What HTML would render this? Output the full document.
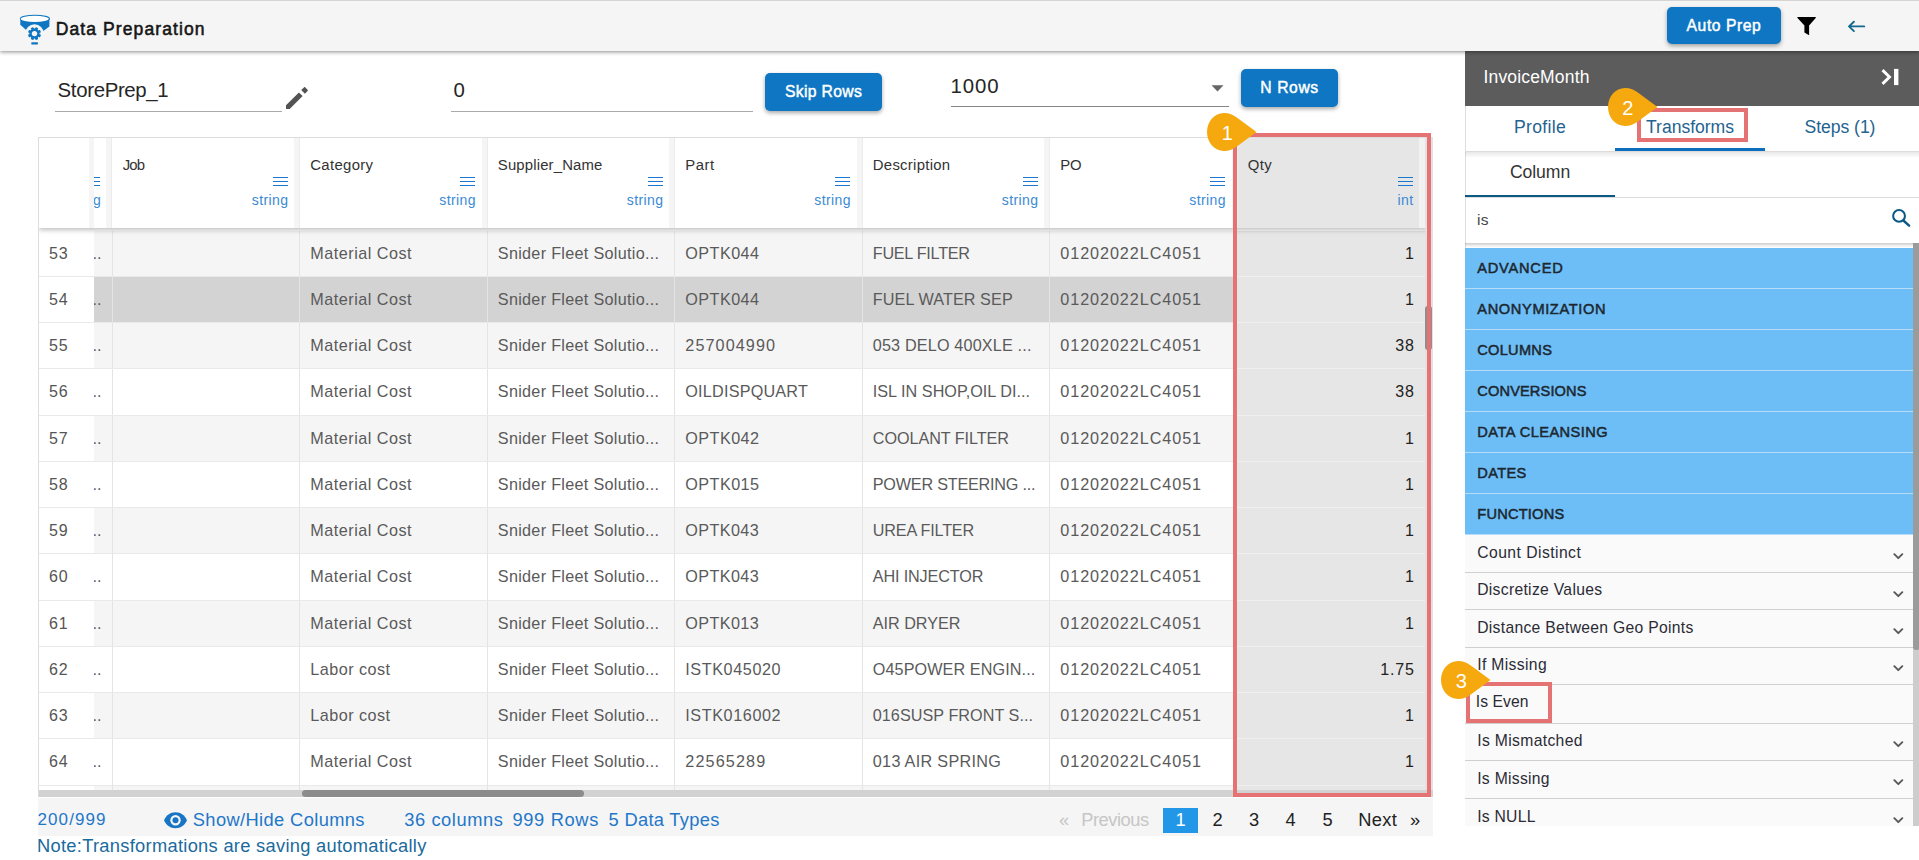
<!DOCTYPE html>
<html>
<head>
<meta charset="utf-8">
<title>Data Preparation</title>
<style>
*{box-sizing:border-box;margin:0;padding:0}
html,body{width:1919px;height:860px;overflow:hidden;background:#fff;font-family:"Liberation Sans",sans-serif;color:#333}
div,span{white-space:nowrap}
.a{position:absolute}
#hdr{position:absolute;left:0;top:0;width:1919px;height:51px;background:#f5f5f5;box-shadow:0 1px 4px rgba(0,0,0,.45),inset 0 1px 0 #d4d4d4;z-index:5}
#title{position:absolute;left:55.7px;top:18.6px;font-size:17.5px;color:#151515;-webkit-text-stroke:.55px #151515}
.btn{position:absolute;background:#0e76c2;color:#fff;border-radius:5px;font-size:15.7px;text-align:center;box-shadow:0 2px 4px rgba(0,0,0,.35);-webkit-text-stroke:.45px #fff}
.uline{position:absolute;height:1px;background:#aaa}
.tbtxt{position:absolute;font-size:20.4px;color:#262626}
#tbl{position:absolute;left:38px;top:137px;width:1395px;height:660px;border-left:1px solid #ddd;border-top:1px solid #ddd;overflow:hidden;background:#fff}
#thead{position:absolute;left:0;top:0;width:1395px;height:90px;background:#fff;box-shadow:0 2px 5px rgba(0,0,0,.26);z-index:3}
.th{position:absolute;top:0;height:90px;background:#fff}
.th .nm{position:absolute;left:10.2px;top:18.9px;font-size:14.9px;color:#333}
.th .ty{position:absolute;right:11.6px;top:53.6px;font-size:14px;color:#3a8ad4;letter-spacing:.4px}
.th .hb{position:absolute;right:12.6px;top:39px;width:15px;height:10px}
.th .hb i{position:absolute;left:0;width:15px;height:1.25px;background:#1b78d0}
.th .rs{position:absolute;right:0;top:0;width:6px;height:90px;background:#f5f5f5;border-right:1px solid #ececec}
.row{position:absolute;left:0;width:1387px;height:46.25px;border-bottom:1px solid #e9e9e9}
.row.o{background:#f5f5f5}
.row.e{background:#fff}
.row.s{background:#d3d3d3}
.c{position:absolute;top:0;height:100%;border-left:1px solid #e4e4e4;font-size:16.2px;color:#5a5a5a;line-height:44px;padding-left:10.1px;overflow:hidden}
.rn{position:absolute;left:0;top:0;width:55px;height:100%;background:#fff;font-size:16px;color:#555;line-height:45px;padding-left:10px;letter-spacing:.8px}
.q{position:absolute;top:0;height:calc(100% + 1px);background:#e6e6e6;text-align:right;padding-right:9.6px;font-size:16px;color:#222;line-height:45px;border-bottom:1px solid #efefef;letter-spacing:.9px}
#ftr{position:absolute;left:38px;top:797.5px;width:1395px;height:38.2px;background:#f5f5f5}
.ft{position:absolute}
.pg{position:absolute;font-size:18.3px;color:#222;top:808.8px}
#rp{position:absolute;left:1465px;top:51px;width:454px;height:809px;background:#fff;box-shadow:inset 1px 0 0 #dedede}
#rph{position:absolute;left:0;top:0;width:454px;height:55px;background:#5c5c5c}
.tab{position:absolute;top:55px;height:46px;width:150px;text-align:center;font-size:17.6px;color:#24638f;line-height:42px}
.cat{position:absolute;left:0;width:448px;height:41px;background:#6dbef6;border-bottom:1px solid #b5dcf8;font-size:14.6px;color:#1d2730;-webkit-text-stroke:.5px #1d2730;line-height:41px;padding-left:12.3px}
.it{position:absolute;left:0;width:448px;background:#fafafa;border-bottom:1px solid #cfcfcf;font-size:15.7px;color:#2b2b35;padding-left:12.2px}
.it svg{position:absolute;right:9px}
.redbox{position:absolute;border:4px solid #e57373}
.badge{position:absolute;z-index:9}
.badge span{position:absolute;left:1px;top:.8px;width:38px;height:38px;line-height:38px;text-align:center;color:#fff;font-size:20px}
</style>
</head>
<body>
<div id="hdr">
<svg class="a" style="left:14px;top:8px" width="48" height="42" viewBox="14 8 48 42">
<ellipse cx="34.9" cy="18.7" rx="15.1" ry="4" fill="#0f76c2"/>
<path d="M20.3 18.9 L20.3 24.7 L34.5 37.4 L49.4 26.6 L49.4 18.9 Z" fill="#0f76c2"/>
<ellipse cx="34.75" cy="18.85" rx="14.1" ry="3.1" fill="#fff"/>
<circle cx="34.5" cy="33.6" r="9.3" fill="#f5f5f5"/>
<g fill="#0f76c2"><circle cx="34.5" cy="33.6" r="5"/>
<rect x="33.1" y="27.1" width="2.8" height="13" rx=".5" transform="rotate(22.5 34.5 33.6)"/>
<rect x="33.1" y="27.1" width="2.8" height="13" rx=".5" transform="rotate(67.5 34.5 33.6)"/>
<rect x="33.1" y="27.1" width="2.8" height="13" rx=".5" transform="rotate(112.5 34.5 33.6)"/>
<rect x="33.1" y="27.1" width="2.8" height="13" rx=".5" transform="rotate(157.5 34.5 33.6)"/></g>
<circle cx="34.5" cy="33.6" r="2.7" fill="#f5f5f5"/>
<rect x="31.3" y="42.2" width="6.6" height="2.2" rx=".4" fill="#0f76c2"/>
</svg>
<div id="title"><span style="letter-spacing:1.106px">Data Preparation</span></div>
<div class="btn" style="left:1667px;top:6.7px;width:114px;height:37px;line-height:38.8px"><span style="letter-spacing:0.565px">Auto Prep</span></div>
<svg class="a" style="left:1790px;top:10px" width="34" height="30" viewBox="1790 10 34 30"><path d="M1797.9 17.1 H1815.3 C1815.9 17.1 1816 17.6 1815.7 18 L1809.1 25.6 V35.2 L1804.4 32.4 V25.6 L1797.5 18 C1797.2 17.6 1797.3 17.1 1797.9 17.1 Z" fill="#000"/></svg>
<svg class="a" style="left:1840px;top:14px" width="34" height="26" viewBox="1840 14 34 26"><path d="M1853.9 21.7 L1849 26.4 L1853.9 31.1 M1849.2 26.4 H1864.2" fill="none" stroke="#12698f" stroke-width="1.9" stroke-linecap="round" stroke-linejoin="round"/></svg>
</div>
<div class="tbtxt" style="left:57.6px;top:79.0px"><span style="letter-spacing:-0.34px">StorePrep_1</span></div>
<div class="uline" style="left:55px;top:111px;width:227px"></div>
<svg class="a" style="left:285px;top:86px" width="24" height="24" viewBox="0 0 24 24"><path d="M1 19.3 V23 H4.7 L17.6 10.1 L13.9 6.4 Z M22.6 5.1 C23 4.7 23 4.1 22.6 3.7 L20.3 1.4 C19.9 1 19.3 1 18.9 1.4 L16.2 4.1 L19.9 7.8 Z" fill="#535353"/></svg>
<div class="tbtxt" style="left:453.4px;top:79.0px">0</div>
<div class="uline" style="left:451px;top:111px;width:302px"></div>
<div class="btn" style="left:765px;top:73px;width:117px;height:38px;line-height:38.6px"><span style="letter-spacing:0.349px">Skip Rows</span></div>
<div class="tbtxt" style="left:950.6px;top:74.8px"><span style="letter-spacing:0.842px">1000</span></div>
<svg class="a" style="left:1211px;top:85px" width="13" height="7" viewBox="0 0 13 7"><path d="M0.5 0.3 H12.5 L6.5 6.6 Z" fill="#666"/></svg>
<div class="uline" style="left:951px;top:106px;width:277.5px;background:#858585"></div>
<div class="btn" style="left:1241px;top:69px;width:97px;height:38px;line-height:38.6px"><span style="letter-spacing:0.596px">N Rows</span></div>
<div id="tbl">
<div id="thead">
<div class="th" style="left:55px;width:18px;overflow:hidden"><div class="hb" style="left:-9px;right:auto"><i style="top:0"></i><i style="top:4px"></i><i style="top:8px"></i></div><div class="ty" style="left:-29.5px;right:auto">string</div><div class="rs"></div></div>
<div class="a" style="left:50px;top:0;width:5px;height:90px;background:#f5f5f5"></div>
<div class="th" style="left:73.6px;width:187.5px;background:#fff"><div class="nm"><span style="letter-spacing:-0.858px">Job</span></div><div class="hb"><i style="top:0"></i><i style="top:4px"></i><i style="top:8px"></i></div><div class="ty">string</div><div class="rs" style=""></div></div>
<div class="th" style="left:261.1px;width:187.5px;background:#fff"><div class="nm"><span style="letter-spacing:0.325px">Category</span></div><div class="hb"><i style="top:0"></i><i style="top:4px"></i><i style="top:8px"></i></div><div class="ty">string</div><div class="rs" style=""></div></div>
<div class="th" style="left:448.6px;width:187.5px;background:#fff"><div class="nm"><span style="letter-spacing:0.163px">Supplier_Name</span></div><div class="hb"><i style="top:0"></i><i style="top:4px"></i><i style="top:8px"></i></div><div class="ty">string</div><div class="rs" style=""></div></div>
<div class="th" style="left:636.1px;width:187.5px;background:#fff"><div class="nm"><span style="letter-spacing:0.529px">Part</span></div><div class="hb"><i style="top:0"></i><i style="top:4px"></i><i style="top:8px"></i></div><div class="ty">string</div><div class="rs" style=""></div></div>
<div class="th" style="left:823.6px;width:187.5px;background:#fff"><div class="nm"><span style="letter-spacing:0.282px">Description</span></div><div class="hb"><i style="top:0"></i><i style="top:4px"></i><i style="top:8px"></i></div><div class="ty">string</div><div class="rs" style=""></div></div>
<div class="th" style="left:1011.1px;width:187.5px;background:#fff"><div class="nm"><span style="letter-spacing:-0.216px">PO</span></div><div class="hb"><i style="top:0"></i><i style="top:4px"></i><i style="top:8px"></i></div><div class="ty">string</div><div class="rs" style=""></div></div>
<div class="th" style="left:1198.6px;width:187.5px;background:#e6e6e6"><div class="nm"><span style="letter-spacing:0.414px">Qty</span></div><div class="hb"><i style="top:0"></i><i style="top:4px"></i><i style="top:8px"></i></div><div class="ty">int</div><div class="rs" style="background:#f2f2f2;border-right:0"></div></div>
</div>
<div class="row o" style="top:92.5px"><div class="rn">53</div><div class="c" style="left:55px;width:18px;padding-left:0;border-left:0;letter-spacing:0;text-indent:-1.5px">..</div><div class="c" style="left:72.7px;width:187.5px"></div><div class="c" style="left:260.2px;width:187.5px"><span style="letter-spacing:0.495px">Material Cost</span></div><div class="c" style="left:447.7px;width:187.5px"><span style="letter-spacing:0.297px">Snider Fleet Solutio...</span></div><div class="c" style="left:635.2px;width:187.5px"><span style="letter-spacing:0.451px">OPTK044</span></div><div class="c" style="left:822.7px;width:187.5px"><span style="letter-spacing:-0.264px">FUEL FILTER</span></div><div class="c" style="left:1010.2px;width:187.5px"><span style="letter-spacing:0.928px">01202022LC4051</span></div><div class="q" style="left:1198px;width:187.5px">1</div></div>
<div class="row s" style="top:138.75px"><div class="rn">54</div><div class="c" style="left:55px;width:18px;padding-left:0;border-left:0;letter-spacing:0;text-indent:-1.5px">..</div><div class="c" style="left:72.7px;width:187.5px"></div><div class="c" style="left:260.2px;width:187.5px"><span style="letter-spacing:0.495px">Material Cost</span></div><div class="c" style="left:447.7px;width:187.5px"><span style="letter-spacing:0.297px">Snider Fleet Solutio...</span></div><div class="c" style="left:635.2px;width:187.5px"><span style="letter-spacing:0.451px">OPTK044</span></div><div class="c" style="left:822.7px;width:187.5px"><span style="letter-spacing:0.084px">FUEL WATER SEP</span></div><div class="c" style="left:1010.2px;width:187.5px"><span style="letter-spacing:0.928px">01202022LC4051</span></div><div class="q" style="left:1198px;width:187.5px">1</div></div>
<div class="row o" style="top:185.0px"><div class="rn">55</div><div class="c" style="left:55px;width:18px;padding-left:0;border-left:0;letter-spacing:0;text-indent:-1.5px">..</div><div class="c" style="left:72.7px;width:187.5px"></div><div class="c" style="left:260.2px;width:187.5px"><span style="letter-spacing:0.495px">Material Cost</span></div><div class="c" style="left:447.7px;width:187.5px"><span style="letter-spacing:0.297px">Snider Fleet Solutio...</span></div><div class="c" style="left:635.2px;width:187.5px"><span style="letter-spacing:1.096px">257004990</span></div><div class="c" style="left:822.7px;width:187.5px"><span style="letter-spacing:0.162px">053 DELO 400XLE ...</span></div><div class="c" style="left:1010.2px;width:187.5px"><span style="letter-spacing:0.928px">01202022LC4051</span></div><div class="q" style="left:1198px;width:187.5px">38</div></div>
<div class="row e" style="top:231.25px"><div class="rn">56</div><div class="c" style="left:55px;width:18px;padding-left:0;border-left:0;letter-spacing:0;text-indent:-1.5px">..</div><div class="c" style="left:72.7px;width:187.5px"></div><div class="c" style="left:260.2px;width:187.5px"><span style="letter-spacing:0.495px">Material Cost</span></div><div class="c" style="left:447.7px;width:187.5px"><span style="letter-spacing:0.297px">Snider Fleet Solutio...</span></div><div class="c" style="left:635.2px;width:187.5px"><span style="letter-spacing:0.214px">OILDISPQUART</span></div><div class="c" style="left:822.7px;width:187.5px"><span style="letter-spacing:0.023px">ISL IN SHOP,OIL DI...</span></div><div class="c" style="left:1010.2px;width:187.5px"><span style="letter-spacing:0.928px">01202022LC4051</span></div><div class="q" style="left:1198px;width:187.5px">38</div></div>
<div class="row o" style="top:277.5px"><div class="rn">57</div><div class="c" style="left:55px;width:18px;padding-left:0;border-left:0;letter-spacing:0;text-indent:-1.5px">..</div><div class="c" style="left:72.7px;width:187.5px"></div><div class="c" style="left:260.2px;width:187.5px"><span style="letter-spacing:0.495px">Material Cost</span></div><div class="c" style="left:447.7px;width:187.5px"><span style="letter-spacing:0.297px">Snider Fleet Solutio...</span></div><div class="c" style="left:635.2px;width:187.5px"><span style="letter-spacing:0.451px">OPTK042</span></div><div class="c" style="left:822.7px;width:187.5px"><span style="letter-spacing:-0.063px">COOLANT FILTER</span></div><div class="c" style="left:1010.2px;width:187.5px"><span style="letter-spacing:0.928px">01202022LC4051</span></div><div class="q" style="left:1198px;width:187.5px">1</div></div>
<div class="row e" style="top:323.75px"><div class="rn">58</div><div class="c" style="left:55px;width:18px;padding-left:0;border-left:0;letter-spacing:0;text-indent:-1.5px">..</div><div class="c" style="left:72.7px;width:187.5px"></div><div class="c" style="left:260.2px;width:187.5px"><span style="letter-spacing:0.495px">Material Cost</span></div><div class="c" style="left:447.7px;width:187.5px"><span style="letter-spacing:0.297px">Snider Fleet Solutio...</span></div><div class="c" style="left:635.2px;width:187.5px"><span style="letter-spacing:0.451px">OPTK015</span></div><div class="c" style="left:822.7px;width:187.5px"><span style="letter-spacing:-0.217px">POWER STEERING ...</span></div><div class="c" style="left:1010.2px;width:187.5px"><span style="letter-spacing:0.928px">01202022LC4051</span></div><div class="q" style="left:1198px;width:187.5px">1</div></div>
<div class="row o" style="top:370.0px"><div class="rn">59</div><div class="c" style="left:55px;width:18px;padding-left:0;border-left:0;letter-spacing:0;text-indent:-1.5px">..</div><div class="c" style="left:72.7px;width:187.5px"></div><div class="c" style="left:260.2px;width:187.5px"><span style="letter-spacing:0.495px">Material Cost</span></div><div class="c" style="left:447.7px;width:187.5px"><span style="letter-spacing:0.297px">Snider Fleet Solutio...</span></div><div class="c" style="left:635.2px;width:187.5px"><span style="letter-spacing:0.401px">OPTK043</span></div><div class="c" style="left:822.7px;width:187.5px"><span style="letter-spacing:-0.174px">UREA FILTER</span></div><div class="c" style="left:1010.2px;width:187.5px"><span style="letter-spacing:0.928px">01202022LC4051</span></div><div class="q" style="left:1198px;width:187.5px">1</div></div>
<div class="row e" style="top:416.25px"><div class="rn">60</div><div class="c" style="left:55px;width:18px;padding-left:0;border-left:0;letter-spacing:0;text-indent:-1.5px">..</div><div class="c" style="left:72.7px;width:187.5px"></div><div class="c" style="left:260.2px;width:187.5px"><span style="letter-spacing:0.495px">Material Cost</span></div><div class="c" style="left:447.7px;width:187.5px"><span style="letter-spacing:0.297px">Snider Fleet Solutio...</span></div><div class="c" style="left:635.2px;width:187.5px"><span style="letter-spacing:0.401px">OPTK043</span></div><div class="c" style="left:822.7px;width:187.5px"><span style="letter-spacing:-0.14px">AHI INJECTOR</span></div><div class="c" style="left:1010.2px;width:187.5px"><span style="letter-spacing:0.928px">01202022LC4051</span></div><div class="q" style="left:1198px;width:187.5px">1</div></div>
<div class="row o" style="top:462.5px"><div class="rn">61</div><div class="c" style="left:55px;width:18px;padding-left:0;border-left:0;letter-spacing:0;text-indent:-1.5px">..</div><div class="c" style="left:72.7px;width:187.5px"></div><div class="c" style="left:260.2px;width:187.5px"><span style="letter-spacing:0.495px">Material Cost</span></div><div class="c" style="left:447.7px;width:187.5px"><span style="letter-spacing:0.297px">Snider Fleet Solutio...</span></div><div class="c" style="left:635.2px;width:187.5px"><span style="letter-spacing:0.401px">OPTK013</span></div><div class="c" style="left:822.7px;width:187.5px"><span style="letter-spacing:-0.032px">AIR DRYER</span></div><div class="c" style="left:1010.2px;width:187.5px"><span style="letter-spacing:0.928px">01202022LC4051</span></div><div class="q" style="left:1198px;width:187.5px">1</div></div>
<div class="row e" style="top:508.75px"><div class="rn">62</div><div class="c" style="left:55px;width:18px;padding-left:0;border-left:0;letter-spacing:0;text-indent:-1.5px">..</div><div class="c" style="left:72.7px;width:187.5px"></div><div class="c" style="left:260.2px;width:187.5px"><span style="letter-spacing:0.467px">Labor cost</span></div><div class="c" style="left:447.7px;width:187.5px"><span style="letter-spacing:0.297px">Snider Fleet Solutio...</span></div><div class="c" style="left:635.2px;width:187.5px"><span style="letter-spacing:0.589px">ISTK045020</span></div><div class="c" style="left:822.7px;width:187.5px"><span style="letter-spacing:0.093px">O45POWER ENGIN...</span></div><div class="c" style="left:1010.2px;width:187.5px"><span style="letter-spacing:0.928px">01202022LC4051</span></div><div class="q" style="left:1198px;width:187.5px">1.75</div></div>
<div class="row o" style="top:555.0px"><div class="rn">63</div><div class="c" style="left:55px;width:18px;padding-left:0;border-left:0;letter-spacing:0;text-indent:-1.5px">..</div><div class="c" style="left:72.7px;width:187.5px"></div><div class="c" style="left:260.2px;width:187.5px"><span style="letter-spacing:0.467px">Labor cost</span></div><div class="c" style="left:447.7px;width:187.5px"><span style="letter-spacing:0.297px">Snider Fleet Solutio...</span></div><div class="c" style="left:635.2px;width:187.5px"><span style="letter-spacing:0.589px">ISTK016002</span></div><div class="c" style="left:822.7px;width:187.5px"><span style="letter-spacing:0.038px">016SUSP FRONT S...</span></div><div class="c" style="left:1010.2px;width:187.5px"><span style="letter-spacing:0.928px">01202022LC4051</span></div><div class="q" style="left:1198px;width:187.5px">1</div></div>
<div class="row e" style="top:601.25px"><div class="rn">64</div><div class="c" style="left:55px;width:18px;padding-left:0;border-left:0;letter-spacing:0;text-indent:-1.5px">..</div><div class="c" style="left:72.7px;width:187.5px"></div><div class="c" style="left:260.2px;width:187.5px"><span style="letter-spacing:0.495px">Material Cost</span></div><div class="c" style="left:447.7px;width:187.5px"><span style="letter-spacing:0.297px">Snider Fleet Solutio...</span></div><div class="c" style="left:635.2px;width:187.5px"><span style="letter-spacing:1.124px">22565289</span></div><div class="c" style="left:822.7px;width:187.5px"><span style="letter-spacing:0.303px">013 AIR SPRING</span></div><div class="c" style="left:1010.2px;width:187.5px"><span style="letter-spacing:0.928px">01202022LC4051</span></div><div class="q" style="left:1198px;width:187.5px">1</div></div>
<div class="row o" style="top:647.5px"><div class="rn">65</div><div class="c" style="left:55px;width:18px;padding-left:0;border-left:0;letter-spacing:0;text-indent:-1.5px">..</div><div class="c" style="left:72.7px;width:187.5px"></div><div class="c" style="left:260.2px;width:187.5px"></div><div class="c" style="left:447.7px;width:187.5px"></div><div class="c" style="left:635.2px;width:187.5px"></div><div class="c" style="left:822.7px;width:187.5px"></div><div class="c" style="left:1010.2px;width:187.5px"></div><div class="q" style="left:1198px;width:187.5px"></div></div>
<div class="a" style="left:1385.5px;top:0;width:9px;height:652px;background:#e2e2e2;z-index:4"></div>
<div class="a" style="left:1386px;top:168px;width:7px;height:44px;background:#8e8e8e;border-radius:3px;z-index:4"></div>
<div class="a" style="left:0;top:651.5px;width:1395px;height:9px;background:#d2d2d2;z-index:4"></div>
<div class="a" style="left:263px;top:652px;width:282px;height:7px;background:#8c8c8c;border-radius:4px;z-index:4"></div>
</div>
<div id="ftr"></div>
<div class="ft" style="left:37.6px;top:809.8px;font-size:17px;color:#1f77c9"><span style="letter-spacing:1.058px">200/999</span></div>
<svg class="a" style="left:164px;top:812px" width="23" height="17" viewBox="0 0 23 17"><path d="M11.5 .3 C6.3 .3 1.9 3.5 .1 8.3 C1.9 13.1 6.3 16.3 11.5 16.3 C16.7 16.3 21.1 13.1 22.9 8.3 C21.1 3.5 16.7 .3 11.5 .3 Z" fill="#1874c4"/><circle cx="11.5" cy="8.3" r="5.2" fill="#f5f5f5"/><circle cx="11.5" cy="8.3" r="3" fill="#1874c4"/></svg>
<div class="ft" style="left:192.8px;top:808.8px;font-size:18.3px;color:#1f77c9"><span style="letter-spacing:0.38px">Show/Hide Columns</span></div>
<div class="ft" style="left:404.3px;top:808.8px;font-size:18.3px;color:#1f77c9"><span style="letter-spacing:0.567px">36 columns</span></div>
<div class="ft" style="left:512.4px;top:808.8px;font-size:18.3px;color:#1f77c9"><span style="letter-spacing:0.672px">999 Rows</span></div>
<div class="ft" style="left:608.6px;top:808.8px;font-size:18.3px;color:#1f77c9"><span style="letter-spacing:0.301px">5 Data Types</span></div>
<div class="ft" style="left:37px;top:834.9px;font-size:18.3px;color:#1b6a9c"><span style="letter-spacing:0.296px">Note:Transformations are saving automatically</span></div>
<div class="pg" style="left:1059px;color:#c6c6c6">&laquo;</div>
<div class="pg" style="left:1081.3px;color:#c6c6c6"><span style="letter-spacing:-0.477px">Previous</span></div>
<div class="a" style="left:1163px;top:808px;width:35px;height:25px;background:#2297e8"></div>
<div class="pg" style="left:1163.2px;width:35px;text-align:center;color:#fff">1</div>
<div class="pg" style="left:1200.2px;width:35px;text-align:center;color:#222">2</div>
<div class="pg" style="left:1236.5px;width:35px;text-align:center;color:#222">3</div>
<div class="pg" style="left:1273.2px;width:35px;text-align:center;color:#222">4</div>
<div class="pg" style="left:1310.1px;width:35px;text-align:center;color:#222">5</div>
<div class="pg" style="left:1358.3px"><span style="letter-spacing:0.335px">Next</span></div>
<div class="pg" style="left:1410px">&raquo;</div>
<div id="rp">
<div id="rph"></div>
<div class="a" style="left:18.5px;top:16px;font-size:17.5px;color:#fff"><span style="letter-spacing:0.164px">InvoiceMonth</span></div>
<svg class="a" style="left:410px;top:10px" width="34" height="34" viewBox="1875 61 34 34"><path d="M1882.5 70.1 L1889.5 77 L1882.5 83.9" fill="none" stroke="#fff" stroke-width="2.9" stroke-linejoin="miter"/><rect x="1894" y="68.9" width="4.4" height="16.2" fill="#fff"/></svg>
<div class="tab" style="left:0px"><span style="letter-spacing:0.337px">Profile</span></div>
<div class="tab" style="left:150px"><span style="letter-spacing:-0.035px">Transforms</span></div>
<div class="tab" style="left:300px"><span style="letter-spacing:-0.061px">Steps (1)</span></div>
<div class="a" style="left:0;top:100px;width:454px;height:1px;background:#dcdcdc"></div>
<div class="a" style="left:150px;top:96.7px;width:150px;height:3.3px;background:#0d6ebd"></div>
<div class="a" style="left:0;top:101px;width:454px;height:6px;background:linear-gradient(rgba(0,0,0,.09),rgba(0,0,0,0))"></div>
<div class="a" style="left:0;top:101px;width:150px;height:45px;text-align:center;font-size:17.6px;color:#333;line-height:41px"><span style="letter-spacing:-0.065px">Column</span></div>
<div class="a" style="left:0;top:145.5px;width:454px;height:1px;background:#dcdcdc"></div>
<div class="a" style="left:0;top:143.7px;width:150px;height:2.5px;background:#0b5a85"></div>
<div class="a" style="left:0;top:192px;width:454px;height:5px;background:linear-gradient(rgba(0,0,0,.2),rgba(0,0,0,.05) 60%,rgba(0,0,0,0))"></div>
<div class="a" style="left:12px;top:160px;font-size:15.5px;color:#444;letter-spacing:.4px">is</div>
<svg class="a" style="left:420px;top:149px" width="34" height="34" viewBox="1885 200 34 34"><circle cx="1899.05" cy="215.9" r="5.9" fill="none" stroke="#0a5a85" stroke-width="2.05"/><path d="M1903.4 220.5 L1909.1 225.7" stroke="#0a5a85" stroke-width="2.4" stroke-linecap="round"/></svg>
<div class="cat" style="top:196.5px"><span style="letter-spacing:0.769px">ADVANCED</span></div>
<div class="cat" style="top:237.5px"><span style="letter-spacing:0.638px">ANONYMIZATION</span></div>
<div class="cat" style="top:278.5px"><span style="letter-spacing:0.269px">COLUMNS</span></div>
<div class="cat" style="top:319.5px"><span style="letter-spacing:0.134px">CONVERSIONS</span></div>
<div class="cat" style="top:360.5px"><span style="letter-spacing:0.465px">DATA CLEANSING</span></div>
<div class="cat" style="top:401.5px"><span style="letter-spacing:0.33px">DATES</span></div>
<div class="cat" style="top:442.5px"><span style="letter-spacing:0.22px">FUNCTIONS</span></div>
<div class="it" style="top:483.5px;height:38.39999999999998px;line-height:35.8px"><span style="letter-spacing:0.457px">Count Distinct</span><svg style="top:18px" width="11" height="7" viewBox="0 0 11 7"><path d="M1.3 1.2 L5.3 5.2 L9.3 1.2" fill="none" stroke="#585858" stroke-width="1.9" stroke-linecap="round" stroke-linejoin="round"/></svg></div>
<div class="it" style="top:521.9px;height:37.200000000000045px;line-height:34.6px"><span style="letter-spacing:0.304px">Discretize Values</span><svg style="top:18px" width="11" height="7" viewBox="0 0 11 7"><path d="M1.3 1.2 L5.3 5.2 L9.3 1.2" fill="none" stroke="#585858" stroke-width="1.9" stroke-linecap="round" stroke-linejoin="round"/></svg></div>
<div class="it" style="top:559.1px;height:37.89999999999998px;line-height:35.3px"><span style="letter-spacing:0.295px">Distance Between Geo Points</span><svg style="top:18px" width="11" height="7" viewBox="0 0 11 7"><path d="M1.3 1.2 L5.3 5.2 L9.3 1.2" fill="none" stroke="#585858" stroke-width="1.9" stroke-linecap="round" stroke-linejoin="round"/></svg></div>
<div class="it" style="top:597px;height:36.89999999999998px;line-height:34.3px"><span style="letter-spacing:0.359px">If Missing</span><svg style="top:17px" width="11" height="7" viewBox="0 0 11 7"><path d="M1.3 1.2 L5.3 5.2 L9.3 1.2" fill="none" stroke="#585858" stroke-width="1.9" stroke-linecap="round" stroke-linejoin="round"/></svg></div>
<div class="it" style="top:633.9px;height:39.200000000000045px;line-height:34.6px;padding-left:10.8px"><span style="letter-spacing:0.062px">Is Even</span></div>
<div class="it" style="top:673.1px;height:36.69999999999993px;line-height:34.1px"><span style="letter-spacing:0.347px">Is Mismatched</span><svg style="top:17px" width="11" height="7" viewBox="0 0 11 7"><path d="M1.3 1.2 L5.3 5.2 L9.3 1.2" fill="none" stroke="#585858" stroke-width="1.9" stroke-linecap="round" stroke-linejoin="round"/></svg></div>
<div class="it" style="top:709.8px;height:38.0px;line-height:35.4px"><span style="letter-spacing:0.294px">Is Missing</span><svg style="top:18px" width="11" height="7" viewBox="0 0 11 7"><path d="M1.3 1.2 L5.3 5.2 L9.3 1.2" fill="none" stroke="#585858" stroke-width="1.9" stroke-linecap="round" stroke-linejoin="round"/></svg></div>
<div class="it" style="top:747.8px;height:37.700000000000045px;line-height:35.1px"><span style="letter-spacing:0.255px">Is NULL</span><svg style="top:18px" width="11" height="7" viewBox="0 0 11 7"><path d="M1.3 1.2 L5.3 5.2 L9.3 1.2" fill="none" stroke="#585858" stroke-width="1.9" stroke-linecap="round" stroke-linejoin="round"/></svg></div>
<div class="a" style="left:0;top:775px;width:454px;height:40px;background:#fff"></div>
<div class="a" style="left:447.6px;top:192px;width:7px;height:583px;background:#cdcdcd"></div>
<div class="a" style="left:447.6px;top:192px;width:7px;height:407px;background:#9b9b9b;border-radius:0 0 3px 3px"></div>
</div>
<div class="redbox" style="left:1233px;top:133px;width:198px;height:664px;z-index:8"></div>
<div class="redbox" style="left:1637px;top:108px;width:111px;height:34px;z-index:8"></div>
<div class="redbox" style="left:1465.5px;top:682.1px;width:86.5px;height:41.3px;z-index:8"></div>
<div class="badge" style="left:1207.4px;top:113px;width:52px;height:38px"><svg width="52" height="38" viewBox="0 0 52 38" style="position:absolute;left:0;top:0"><path d="M0 19 C0 8.5 7.6 0 17 0 C22.3 0 26.3 2 29.8 4.6 L49.5 19 L29.8 33.4 C26.3 36 22.3 38 17 38 C7.6 38 0 29.5 0 19 Z" fill="#f6a90e"/></svg><span>1</span></div>
<div class="badge" style="left:1607.8px;top:88px;width:52px;height:38px"><svg width="52" height="38" viewBox="0 0 52 38" style="position:absolute;left:0;top:0"><path d="M0 19 C0 8.5 7.6 0 17 0 C22.3 0 26.3 2 29.8 4.6 L49.5 19 L29.8 33.4 C26.3 36 22.3 38 17 38 C7.6 38 0 29.5 0 19 Z" fill="#f6a90e"/></svg><span>2</span></div>
<div class="badge" style="left:1441.2px;top:661px;width:52px;height:38px"><svg width="52" height="38" viewBox="0 0 52 38" style="position:absolute;left:0;top:0"><path d="M0 19 C0 8.5 7.6 0 17 0 C22.3 0 26.3 2 29.8 4.6 L49.5 19 L29.8 33.4 C26.3 36 22.3 38 17 38 C7.6 38 0 29.5 0 19 Z" fill="#f6a90e"/></svg><span>3</span></div>
</body>
</html>
